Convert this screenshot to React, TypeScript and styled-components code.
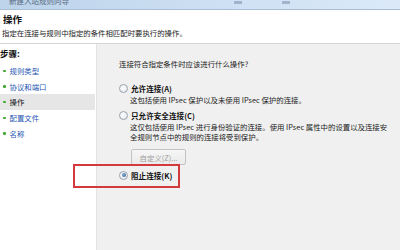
import React from 'react'
import styled, { createGlobalStyle } from 'styled-components'

const GlobalStyle = createGlobalStyle`
  body {
    margin: 0;
    font-family: "Noto Sans CJK SC", "DejaVu Sans", sans-serif;
    color: #1b1b1b;
  }
`

type Step = { label: string; current?: boolean }

const steps: Array<Step> = [
  { label: '规则类型' },
  { label: '协议和端口' },
  { label: '操作', current: true },
  { label: '配置文件' },
  { label: '名称' },
]

type Option = { label: string; desc: Array<string>; checked?: boolean }

const options: Array<Option> = [
  { label: '允许连接(A)', desc: ['这包括使用 IPsec 保护以及未使用 IPsec 保护的连接。'] },
  {
    label: '只允许安全连接(C)',
    desc: [
      '这仅包括使用 IPsec 进行身份验证的连接。使用 IPsec 属性中的设置以及连接安',
      '全规则节点中的规则的连接将受到保护。',
    ],
  },
]

export default function App() {
  return (
    <Window>
      <GlobalStyle />
      <TitleBar>
        <TitleText>新建入站规则向导</TitleText>
        <Controls>
          <Ctrl />
          <Ctrl />
        </Controls>
      </TitleBar>
      <Header>
        <HeaderTitle>操作</HeaderTitle>
        <HeaderDesc>指定在连接与规则中指定的条件相匹配时要执行的操作。</HeaderDesc>
      </Header>
      <Body>
        <Sidebar>
          <StepsTitle>步骤:</StepsTitle>
          {steps.map((s) => (
            <StepItem key={s.label} current={s.current}>
              <Bullet />
              <StepLabel current={s.current}>{s.label}</StepLabel>
            </StepItem>
          ))}
        </Sidebar>
        <Content>
          <Question>连接符合指定条件时应该进行什么操作?</Question>
          {options.map((o) => (
            <OptionBlock key={o.label}>
              <RadioRow>
                <Radio />
                <RadioLabel>{o.label}</RadioLabel>
              </RadioRow>
              {o.desc.map((d) => (
                <Desc key={d}>{d}</Desc>
              ))}
            </OptionBlock>
          ))}
          <CustomButton disabled>自定义(Z)...</CustomButton>
          <RadioRow>
            <Radio checked />
            <RadioLabel>阻止连接(K)</RadioLabel>
          </RadioRow>
        </Content>
      </Body>
      <Highlight />
    </Window>
  )
}

const Window = styled.div`
  position: relative;
  width: 400px;
  height: 250px;
  overflow: hidden;
  display: flex;
  flex-direction: column;
  background: #f0f0f0;
`

const TitleBar = styled.div`
  height: 9px;
  flex-shrink: 0;
  display: flex;
  align-items: flex-start;
  justify-content: space-between;
  background: linear-gradient(to right, #bcd3ea, #cfe1f4 60%, #dbe9f8);
  border-bottom: 1px solid #a9bed6;
  overflow: hidden;
`

const TitleText = styled.div`
  margin: -4px 0 0 9px;
  font-size: 7.5px;
  line-height: 10px;
  color: #2a3a50;
  opacity: 0.7;
`

const Controls = styled.div`
  display: flex;
  gap: 40px;
  margin-right: 110px;
`

const Ctrl = styled.div`
  width: 8px;
  height: 3px;
  margin-top: 1px;
  background: #6f86a3;
  opacity: 0.5;
`

const Header = styled.div`
  height: 34px;
  flex-shrink: 0;
  background: #ffffff;
  border-bottom: 1px solid #d5d5d5;
  padding: 3px 0 0 2px;
  box-sizing: border-box;
`

const HeaderTitle = styled.div`
  font-size: 9.5px;
  font-weight: 700;
  line-height: 12px;
  margin-left: 1px;
  color: #111;
`

const HeaderDesc = styled.div`
  margin-top: 3px;
  font-size: 7.4px;
  line-height: 10px;
  color: #222;
`

const Body = styled.div`
  flex: 1;
  display: flex;
`

const Sidebar = styled.div`
  width: 96px;
  flex-shrink: 0;
  background: #ffffff;
  border-right: 1px solid #e3e3e3;
  padding-top: 4px;
`

const StepsTitle = styled.div`
  font-size: 8.5px;
  font-weight: 700;
  line-height: 11px;
  color: #111;
  margin-bottom: 4px;
`

const StepItem = styled.div<{ current?: boolean }>`
  display: flex;
  align-items: center;
  height: 15.7px;
  padding-left: 3px;
  margin-right: 1px;
  background: ${({ current }) => (current ? '#e6e6e6' : 'transparent')};
`

const Bullet = styled.span`
  width: 2.5px;
  height: 2.5px;
  border-radius: 50%;
  background: #3fa62d;
  margin-right: 4px;
`

const StepLabel = styled.span<{ current?: boolean }>`
  font-size: 7.4px;
  line-height: 10px;
  color: ${({ current }) => (current ? '#111' : '#1f58b3')};
`

const Content = styled.div`
  flex: 1;
  padding: 15px 0 0 22px;
  display: flex;
  flex-direction: column;
  align-items: flex-start;
`

const Question = styled.div`
  font-size: 7.4px;
  line-height: 10px;
  color: #222;
  margin-bottom: 13px;
`

const OptionBlock = styled.div`
  display: flex;
  flex-direction: column;
  margin-bottom: 4px;
`

const RadioRow = styled.div`
  display: flex;
  align-items: center;
  height: 12px;
  margin-bottom: 1px;
`

const Radio = styled.span<{ checked?: boolean }>`
  position: relative;
  width: 7px;
  height: 7px;
  border-radius: 50%;
  border: 1px solid #9aa3ad;
  background: radial-gradient(circle at 40% 40%, #ffffff, #e2e4e7);
  margin-right: 3px;
  &::after {
    content: '';
    display: ${({ checked }) => (checked ? 'block' : 'none')};
    position: absolute;
    left: 1.5px;
    top: 1.5px;
    width: 4px;
    height: 4px;
    border-radius: 50%;
    background: radial-gradient(circle at 40% 40%, #7fb2df, #25507e);
  }
`

const RadioLabel = styled.span`
  font-size: 7.6px;
  font-weight: 700;
  color: #111;
`

const Desc = styled.div`
  margin-left: 11px;
  font-size: 7.4px;
  line-height: 10px;
  color: #222;
  white-space: nowrap;
`

const CustomButton = styled.button`
  margin: 3px 0 4px 12px;
  width: 55px;
  height: 16px;
  padding: 0;
  font-family: inherit;
  font-size: 7.4px;
  color: #9c9c9c;
  background: linear-gradient(#f6f6f6, #ebebeb);
  border: 1px solid #c3c3c3;
  border-radius: 2px;
`

const Highlight = styled.div`
  position: absolute;
  left: 73px;
  top: 164px;
  width: 107px;
  height: 24px;
  border: 2px solid #d6393d;
  box-sizing: border-box;
  pointer-events: none;
`
